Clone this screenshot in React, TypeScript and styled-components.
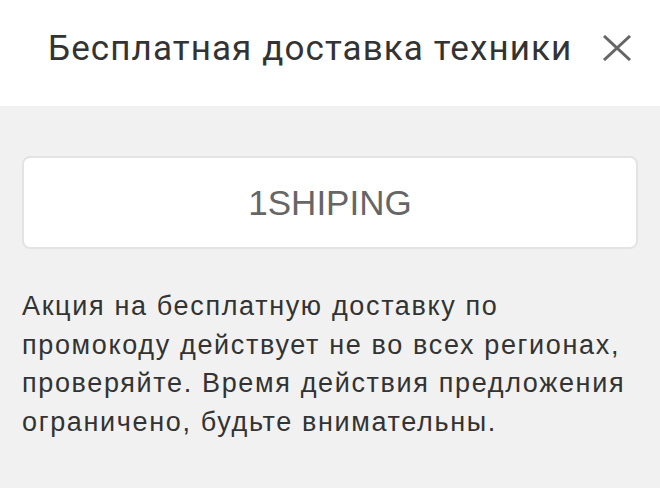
import styled, { createGlobalStyle } from 'styled-components';

const GlobalStyle = createGlobalStyle`
  html, body {
    margin: 0;
    padding: 0;
    background: #f1f1f1;
  }
`;

const PROMO_CODE = '1SHIPING';

const App = () => {
  return (
    <>
      <GlobalStyle />
      <Wrapper>
        <Header>
          <Title>Бесплатная доставка техники</Title>
          <CloseButton aria-label='Закрыть'>
            <svg width='30' height='26' viewBox='0 0 30 26'>
              <path d='M2 1 L28 25 M28 1 L2 25' stroke='#666' strokeWidth='3' fill='none' />
            </svg>
          </CloseButton>
        </Header>
        <Body>
          <CodeBox>{PROMO_CODE}</CodeBox>
          <Note>
            Акция на бесплатную доставку по промокоду действует не во всех регионах,
            проверяйте. Время действия предложения ограничено, будьте внимательны.
          </Note>
        </Body>
      </Wrapper>
    </>
  );
};

const Wrapper = styled.div`
  width: 660px;
  height: 488px;
  display: flex;
  flex-direction: column;
  background: #f1f1f1;
  overflow: hidden;
`;

const Header = styled.div`
  display: flex;
  align-items: center;
  gap: 30px;
  height: 106px;
  padding: 0 0 10px 48px;
  box-sizing: border-box;
  background: #fff;
`;

const Title = styled.h1`
  margin: 0;
  font-family: Roboto, 'Noto Sans', sans-serif;
  font-size: 35px;
  font-weight: 400;
  letter-spacing: 1.1px;
  color: #333;
`;

const CloseButton = styled.button`
  display: flex;
  padding: 0;
  border: none;
  background: none;
  cursor: pointer;
`;

const Body = styled.div`
  padding: 50px 22px 0;
`;

const CodeBox = styled.div`
  display: flex;
  align-items: center;
  justify-content: center;
  height: 93px;
  box-sizing: border-box;
  border: 2px solid #e3e3e3;
  border-radius: 8px;
  background: #fff;
  font-family: 'Liberation Sans', Arial, sans-serif;
  font-size: 35px;
  color: #666;
`;

const Note = styled.p`
  max-width: 610px;
  margin: 38px 0 0;
  font-family: 'Liberation Sans', Arial, sans-serif;
  font-size: 27px;
  line-height: 38.5px;
  letter-spacing: 1.65px;
  color: #333;
`;

export default App;
